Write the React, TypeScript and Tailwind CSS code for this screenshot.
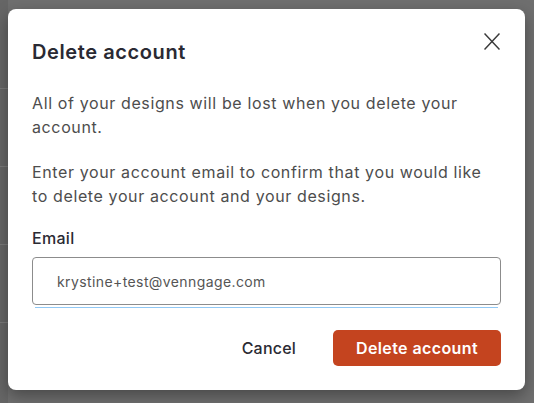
import React from "react";

export default function App() {
  return (
    <div
      className="relative w-[534px] h-[403px] overflow-hidden bg-[#6f6f6f]"
      style={{ fontFamily: "Inter, 'Noto Sans', sans-serif" }}
    >
      {/* background page strip */}
      <div className="absolute left-0 top-0 h-full w-[8px] bg-[#666666] flex flex-col">
        <div className="h-[88px]" />
        <div className="h-px bg-[#7a7a7a]" />
        <div className="h-[77px]" />
        <div className="h-px bg-[#7a7a7a]" />
        <div className="h-[77px]" />
        <div className="h-px bg-[#7a7a7a]" />
        <div className="h-[77px]" />
        <div className="h-px bg-[#7a7a7a]" />
      </div>

      {/* modal */}
      <div className="absolute left-[8px] top-[9px] w-[517px] h-[381px] bg-white rounded-[8px] shadow-[0_6px_16px_rgba(0,0,0,0.35)] px-[24px] pt-[29px] flex flex-col">
        <div className="flex items-start justify-between">
          <h2 className="text-[20px] leading-[28px] font-semibold text-[#2a2a33] tracking-[0.6px]">
            Delete account
          </h2>
          <button className="absolute right-[25px] top-[24px] w-[16px] h-[17px] text-[#333]">
            <svg width="16" height="17" viewBox="0 0 16 17" fill="none">
              <path d="M0.5 0.5L15.5 16.5M15.5 0.5L0.5 16.5" stroke="#3a3a3a" strokeWidth="1.5" />
            </svg>
          </button>
        </div>

        <p className="mt-[25px] text-[16px] leading-[24px] text-[#4d4d4d] tracking-[0.62px]">
          All of your designs will be lost when you delete your account.
        </p>
        <p className="mt-[21px] text-[16px] leading-[24px] text-[#4d4d4d] tracking-[0.62px]">
          Enter your account email to confirm that you would like to delete your account and your designs.
        </p>

        <label className="mt-[18px] text-[16px] leading-[24px] font-medium text-[#2a2a33] tracking-[0.3px]">
          Email
        </label>
        <div className="mt-[7px] h-[48px] border border-[#8c8c8c] rounded-[4px] flex items-center pl-[24px]">
          <span className="text-[14px] text-[#555555] tracking-[0.4px]">krystine+test@venngage.com</span>
        </div>
        <div className="mx-[3px] mt-[2px] h-px bg-[#90c8f5]" />

        <div className="mt-[22px] flex items-center justify-end">
          <button className="text-[16px] font-medium text-[#2a2a33] mr-[37px] tracking-[0.2px]">Cancel</button>
          <button className="w-[168px] h-[36px] rounded-[5px] bg-[#c4441f] text-white text-[16px] font-semibold tracking-[0.4px]">
            Delete account
          </button>
        </div>
      </div>
    </div>
  );
}
